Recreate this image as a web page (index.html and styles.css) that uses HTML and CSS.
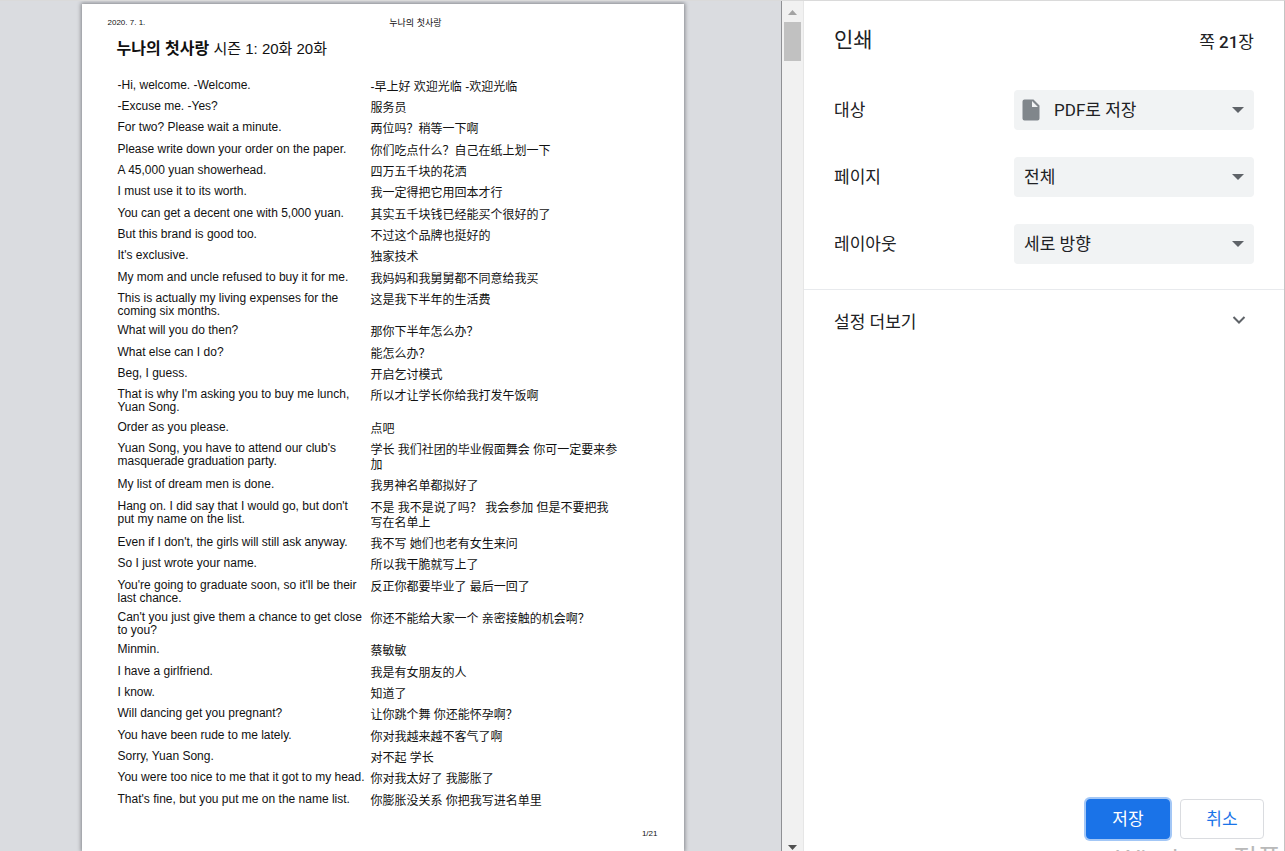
FILE: index.html
```html
<!DOCTYPE html>
<html lang="ko">
<head>
  <meta charset="UTF-8">
  <meta name="viewport" content="width=device-width, initial-scale=1.0">
  <title>인쇄</title>
  <link rel="stylesheet" href="styles.css">
</head>
<body>

<div class="print-dialog">

  <main class="preview">
    <article class="paper">
      <div class="paper-header">
        <span class="date">2020. 7. 1.</span>
        <span class="doc-name">누나의 첫사랑</span>
      </div>

      <h1><strong>누나의 첫사랑</strong> 시즌 1: 20화 20화</h1>

      <table class="script">
        <tbody>
          <tr><td>-Hi, welcome. -Welcome.</td><td lang="zh">-早上好 欢迎光临 -欢迎光临</td></tr>
          <tr><td>-Excuse me. -Yes?</td><td lang="zh">服务员</td></tr>
          <tr><td>For two? Please wait a minute.</td><td lang="zh">两位吗？稍等一下啊</td></tr>
          <tr><td>Please write down your order on the paper.</td><td lang="zh">你们吃点什么？自己在纸上划一下</td></tr>
          <tr><td>A 45,000 yuan showerhead.</td><td lang="zh">四万五千块的花洒</td></tr>
          <tr><td>I must use it to its worth.</td><td lang="zh">我一定得把它用回本才行</td></tr>
          <tr><td>You can get a decent one with 5,000 yuan.</td><td lang="zh">其实五千块钱已经能买个很好的了</td></tr>
          <tr><td>But this brand is good too.</td><td lang="zh">不过这个品牌也挺好的</td></tr>
          <tr><td>It's exclusive.</td><td lang="zh">独家技术</td></tr>
          <tr><td>My mom and uncle refused to buy it for me.</td><td lang="zh">我妈妈和我舅舅都不同意给我买</td></tr>
          <tr><td>This is actually my living expenses for the coming six months.</td><td lang="zh">这是我下半年的生活费</td></tr>
          <tr><td>What will you do then?</td><td lang="zh">那你下半年怎么办？</td></tr>
          <tr><td>What else can I do?</td><td lang="zh">能怎么办？</td></tr>
          <tr><td>Beg, I guess.</td><td lang="zh">开启乞讨模式</td></tr>
          <tr><td>That is why I'm asking you to buy me lunch, Yuan Song.</td><td lang="zh">所以才让学长你给我打发午饭啊</td></tr>
          <tr><td>Order as you please.</td><td lang="zh">点吧</td></tr>
          <tr><td>Yuan Song, you have to attend our club's masquerade graduation party.</td><td lang="zh">学长 我们社团的毕业假面舞会 你可一定要来参加</td></tr>
          <tr><td>My list of dream men is done.</td><td lang="zh">我男神名单都拟好了</td></tr>
          <tr><td>Hang on. I did say that I would go, but don't put my name on the list.</td><td lang="zh">不是 我不是说了吗？ 我会参加 但是不要把我写在名单上</td></tr>
          <tr><td>Even if I don't, the girls will still ask anyway.</td><td lang="zh">我不写 她们也老有女生来问</td></tr>
          <tr><td>So I just wrote your name.</td><td lang="zh">所以我干脆就写上了</td></tr>
          <tr><td>You're going to graduate soon, so it'll be their last chance.</td><td lang="zh">反正你都要毕业了 最后一回了</td></tr>
          <tr><td>Can't you just give them a chance to get close to you?</td><td lang="zh">你还不能给大家一个 亲密接触的机会啊？</td></tr>
          <tr><td>Minmin.</td><td lang="zh">蔡敏敏</td></tr>
          <tr><td>I have a girlfriend.</td><td lang="zh">我是有女朋友的人</td></tr>
          <tr><td>I know.</td><td lang="zh">知道了</td></tr>
          <tr><td>Will dancing get you pregnant?</td><td lang="zh">让你跳个舞 你还能怀孕啊？</td></tr>
          <tr><td>You have been rude to me lately.</td><td lang="zh">你对我越来越不客气了啊</td></tr>
          <tr><td>Sorry, Yuan Song.</td><td lang="zh">对不起 学长</td></tr>
          <tr><td>You were too nice to me that it got to my head.</td><td lang="zh">你对我太好了 我膨胀了</td></tr>
          <tr><td>That's fine, but you put me on the name list.</td><td lang="zh">你膨胀没关系 你把我写进名单里</td></tr>
        </tbody>
      </table>

      <div class="page-number">1/21</div>
    </article>
  </main>

  <div class="scrollbar">
    <svg class="scroll-up" width="9" height="5" viewBox="0 0 9 5"><path d="M0 5 4.500 0 9 5z"/></svg>
    <div class="thumb"></div>
    <svg class="scroll-down" width="9" height="5" viewBox="0 0 9 5"><path d="M0 0h9L4.500 5z"/></svg>
  </div>

  <aside class="sidebar">
    <header>
      <h2>인쇄</h2>
      <span class="sheets">쪽 <b>21</b>장</span>
    </header>

    <form class="settings">
      <div class="row">
        <label for="destination">대상</label>
        <div class="select with-icon">
          <select id="destination"><option>PDF로 저장</option></select>
          <svg class="file" width="18" height="22" viewBox="0 0 18 22">
            <path fill-rule="evenodd" d="M2.500 0.500H11.500L17.500 6.500V19.500Q17.500 21.500 15.500 21.500H2.500Q0.500 21.500 0.500 19.500V2.500Q0.500 0.500 2.500 0.500ZM10 2V8H16Z"/>
          </svg>
          <svg class="arrow" width="12" height="6" viewBox="0 0 12 6"><path d="M0 0h12L6 6z"/></svg>
        </div>
      </div>

      <div class="row">
        <label for="pages">페이지</label>
        <div class="select">
          <select id="pages"><option>전체</option></select>
          <svg class="arrow" width="12" height="6" viewBox="0 0 12 6"><path d="M0 0h12L6 6z"/></svg>
        </div>
      </div>

      <div class="row">
        <label for="layout">레이아웃</label>
        <div class="select">
          <select id="layout"><option>세로 방향</option></select>
          <svg class="arrow" width="12" height="6" viewBox="0 0 12 6"><path d="M0 0h12L6 6z"/></svg>
        </div>
      </div>
    </form>

    <button type="button" class="more">
      <span>설정 더보기</span>
      <svg width="14" height="8" viewBox="0 0 14 8"><path d="M1.500 1 7 6.500 12.500 1"/></svg>
    </button>

    <footer>
      <button type="button" class="save">저장</button>
      <button type="button" class="cancel">취소</button>
    </footer>
  </aside>

  <div class="watermark">Windows 정품 인증</div>
</div>

</body>
</html>
```

FILE: styles.css
```css
* {
  box-sizing: border-box;
}

body {
  margin: 0;
  font-family: Roboto, 'Noto Sans CJK KR', sans-serif;
  color: #202124;
}

.print-dialog {
  position: relative;
  display: flex;
  height: 100vh;
  overflow: hidden;
  border-top: 1px solid #dadada;
  border-right: 1px solid #c4c4c4;
}

/* Page preview */
.preview {
  flex: 1;
  padding: 3px 16px 0 0;
  background-color: #dadce0;
}

.paper {
  width: 602px;
  max-width: 100%;
  min-height: 100%;
  margin: 0 auto;
  padding: 12px 26px 0;
  background-color: #fff;
  box-shadow: 0 0 4px 1px #85878c;
  font-family: 'Liberation Sans', 'Noto Sans CJK KR', sans-serif;
  color: #111;
}

.paper-header {
  display: flex;
  gap: 28px;
  font-size: 8px;
  line-height: 14px;
}

.doc-name {
  flex: 1;
  text-align: center;
  font-size: 9px;
}

.paper h1 {
  margin: 7px 0 15px 9px;
  font-size: 15px;
  line-height: 24px;
  font-weight: normal;
}

.paper h1 strong {
  font-size: 16px;
}

.script {
  border-collapse: collapse;
  table-layout: fixed;
  width: 506px;
  margin-left: 10px;
}

.script td {
  width: 50%;
  padding: 3px 4px 3px 0;
  vertical-align: top;
  font-size: 12px;
  line-height: 13px;
}

.script td:lang(zh) {
  padding-top: 4px;
  padding-bottom: 2px;
  font-family: 'Liberation Sans', 'Noto Sans CJK TC', sans-serif;
  line-height: 15px;
}

.script tr:nth-child(3n) td {
  padding-bottom: 4px;
}

.script tr:nth-child(3n) td:lang(zh) {
  padding-bottom: 3px;
}

.page-number {
  margin-top: 17px;
  text-align: right;
  font-size: 8px;
  line-height: 12px;
}

/* Scrollbar */
.scrollbar {
  display: flex;
  flex-direction: column;
  align-items: center;
  width: 23px;
  padding: 9px 0 1px;
  border-left: 1px solid #8f9094;
  border-right: 1px solid #e6e6e6;
  background-color: #f1f1f1;
}

.scroll-up {
  fill: #a3a3a3;
}

.scroll-down {
  margin-top: auto;
  fill: #505050;
}

.thumb {
  width: 17px;
  height: 39px;
  margin-top: 7px;
  background-color: #c1c1c1;
}

/* Settings */
.sidebar {
  display: flex;
  flex-direction: column;
  width: 480px;
  background-color: #fff;
  font-size: 17px;
}

.sidebar header {
  display: flex;
  justify-content: space-between;
  align-items: center;
  padding: 24px 30px 0;
}

.sidebar h2 {
  margin: 0;
  font-size: 21px;
  line-height: 30px;
  font-weight: normal;
}

.sheets b {
  font-weight: 500;
}

.settings {
  display: flex;
  flex-direction: column;
  gap: 27px;
  padding: 35px 30px 25px;
  border-bottom: 1px solid #e8eaed;
}

.row {
  display: flex;
  justify-content: space-between;
  align-items: center;
}

.row label {
  padding-bottom: 4px;
}

.select {
  position: relative;
  width: 240px;
}

.select select {
  appearance: none;
  display: block;
  width: 100%;
  height: 40px;
  padding: 0 32px 0 10px;
  border: none;
  border-radius: 4px;
  background-color: #f1f3f4;
  color: #202124;
  font-family: inherit;
  font-size: 17px;
}

.with-icon select {
  padding-left: 40px;
}

.select svg {
  position: absolute;
  pointer-events: none;
}

.select .file {
  top: 9px;
  left: 8px;
  fill: #80868b;
}

.select .arrow {
  top: 17px;
  right: 10px;
  fill: #5f6368;
}

.more {
  display: flex;
  justify-content: space-between;
  align-items: center;
  height: 60px;
  padding: 0 38px 0 30px;
  border: none;
  background: none;
  color: #202124;
  font-family: inherit;
  font-size: 17px;
}

.more svg {
  fill: none;
  stroke: #5f6368;
  stroke-width: 2;
}

.sidebar footer {
  display: flex;
  justify-content: flex-end;
  gap: 10px;
  margin-top: auto;
  padding: 0 20px 12px;
}

.sidebar footer button {
  width: 84px;
  height: 40px;
  padding: 0 0 4px;
  border: 1px solid #dadce0;
  border-radius: 4px;
  background-color: #fff;
  color: #1a73e8;
  font-family: inherit;
  font-size: 17px;
}

.sidebar footer .save {
  border-color: #1a73e8;
  background-color: #1a73e8;
  color: #fff;
  box-shadow: 0 0 0 2px #a3c7f6;
}

/* Activation notice, cut off by the bottom edge */
.watermark {
  position: absolute;
  left: 1116px;
  bottom: -27px;
  color: #b9b9b9;
  font-family: 'Open Sans', 'Noto Sans CJK KR', sans-serif;
  font-size: 26px;
  line-height: 40px;
  white-space: nowrap;
}
```
